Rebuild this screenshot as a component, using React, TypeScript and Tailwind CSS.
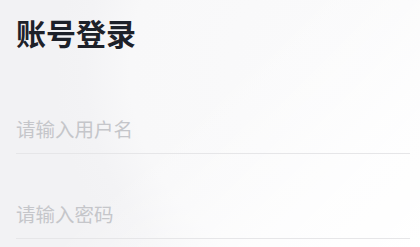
import React from "react";

export default function App() {
  return (
    <div
      className="relative w-[420px] h-[247px] overflow-hidden bg-[#f2f2f4]"
      style={{ fontFamily: '"Noto Sans CJK SC", "Noto Sans", sans-serif' }}
    >
      <div className="absolute inset-0 bg-[radial-gradient(circle_at_330px_70px,#fafafb_0px,#f8f8f9_200px,#f3f3f5_245px,transparent_275px)]" />
      <div className="absolute inset-0 bg-[linear-gradient(135deg,transparent_45%,rgba(255,255,255,0.7)_75%,#ffffff_100%)]" />
      <div className="relative flex flex-col px-4 pt-[10px]">
        <h1 className="text-[30px] leading-[44px] font-bold text-[#1d2129] tracking-[0px]">账号登录</h1>
        <div className="mt-[50px] flex flex-col">
          <div className="h-[50px] flex items-center border-b border-[#e6e6e8] mr-[-6px]">
            <span className="text-[19.5px] text-[#c5c6ca]">请输入用户名</span>
          </div>
          <div className="mt-[35px] h-[50px] flex items-center border-b border-[#e6e6e8] mr-[-6px]">
            <span className="text-[19.5px] text-[#c5c6ca]">请输入密码</span>
          </div>
        </div>
      </div>
    </div>
  );
}
